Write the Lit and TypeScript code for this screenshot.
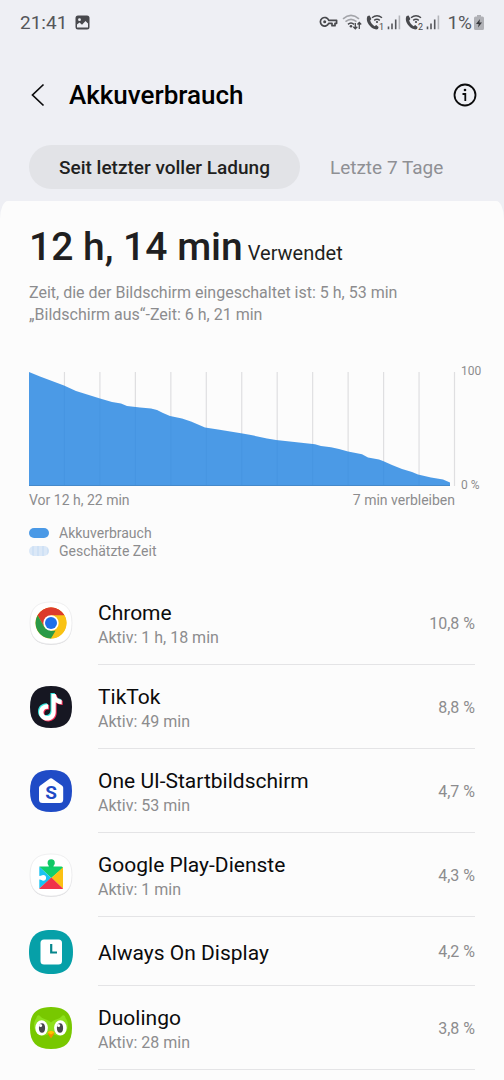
import { LitElement, html, svg, css, nothing, type TemplateResult } from "lit";
import { customElement, property, state } from "lit/decorators.js";
import { classMap } from "lit/directives/class-map.js";

const SQUIRCLE =
  "M22 1C36.500 1 43 7.500 43 22S36.500 43 22 43 1 36.500 1 22 7.500 1 22 1Z";

const chromeIcon = html`<svg viewBox="0 0 44 44" aria-hidden="true">
  <path d=${SQUIRCLE} fill="#d8d8db" transform="translate(0 .7)" />
  <path d=${SQUIRCLE} fill="#fff" stroke="#e6e6e8" stroke-width=".6" />
  <circle cx="22" cy="22" r="15.500" fill="#f9c214" />
  <path d="M22 22 8.600 14.300A15.500 15.500 0 0 1 35.400 14.300Z" fill="#dc3b2c" />
  <path d="M22 14.300H35.400A15.500 15.500 0 0 0 8.600 14.300L15.300 25.900Z" fill="#dc3b2c" />
  <path d="M8.600 14.250 15.300 25.900 22 29.700H28.700L22 37.500A15.500 15.500 0 0 1 8.600 14.250Z" fill="#2b9a47" />
  <path d="M22 14.300H35.450A15.500 15.500 0 0 1 22 37.500L28.700 25.900Z" fill="#f9c214" />
  <circle cx="22" cy="22" r="7.700" fill="#fff" />
  <circle cx="22" cy="22" r="6" fill="#1d6fe8" />
</svg>`;

const NOTE =
  "M22.300 9h4.200c.4 3.500 2.600 5.600 6 5.900v4.400c-2.300 0-4.400-.8-6-2v9.700c0 5-3.800 8.600-8.500 8.600-4.600 0-8.200-3.600-8.200-8.100 0-5 4.200-8.800 9.200-8.100v4.500c-2.500-.7-4.800 1-4.800 3.500 0 2.100 1.700 3.700 3.800 3.700 2.500 0 4.300-1.800 4.300-4.500Z";

const tiktokIcon = html`<svg viewBox="0 0 44 44" aria-hidden="true">
  <path d=${SQUIRCLE} fill="#161722" />
  <path d=${NOTE} fill="#35e6df" transform="translate(-.8 -1)" />
  <path d=${NOTE} fill="#fb3059" transform="translate(1.200 .8)" />
  <path d=${NOTE} fill="#fff" transform="translate(.2 -.1)" />
</svg>`;

const homeIcon = html`<svg viewBox="0 0 44 44" aria-hidden="true">
  <path d=${SQUIRCLE} fill="#1f4bc6" />
  <path
    d="M21 9.600q1-.8 2 0l10.200 7.200q1 .8 1 2V30.500q0 3.500-3.500 3.500H13.500Q10 34 10 30.500V18.800q0-1.200 1-2Z"
    fill="#fff"
  />
  <text x="22" y="29.500" text-anchor="middle" font-size="19" font-weight="700" fill="#1f4bc6">S</text>
</svg>`;

const playIcon = html`<svg viewBox="0 0 44 44" aria-hidden="true">
  <path d=${SQUIRCLE} fill="#d8d8db" transform="translate(0 .7)" />
  <path d=${SQUIRCLE} fill="#fff" stroke="#e6e6e8" stroke-width=".6" />
  <path d="M10.500 13.500H32.500Q34 13.500 34 15L22.300 25 10.500 14Z" fill="#0fcf6c" />
  <path d="M19.800 14.500C20.300 12 18.600 12 18.600 9.900a3.600 3.600 0 0 1 7.200 0C25.800 12 24.100 12 24.600 14.500Z" fill="#0fc765" />
  <path d="M10.300 13.700 22.300 25 10.300 35.500Z" fill="#19c3f2" />
  <path d="M34 14.300 22.300 25 34 35.500Z" fill="#fcc113" />
  <path d="M10.300 35.500 22.300 24.600 34 35.500Q33.800 36 33 36H11.300Q10.500 36 10.300 35.500Z" fill="#f0324a" />
  <path d="M9.500 22.800C12.500 23.300 12.300 21.900 14.200 21.900a2.900 2.900 0 0 1 0 5.800C12.300 27.700 12.500 26.200 9.500 26.700Z" fill="#fff" />
</svg>`;

const clockIcon = html`<svg viewBox="0 0 44 44" aria-hidden="true">
  <path d="M22 0C37 0 44 7 44 22S37 44 22 44 0 37 0 22 7 0 22 0Z" fill="#06a0a8" />
  <rect x="11.500" y="9.500" width="21.500" height="25" rx="3.500" fill="#fff" />
  <path d="M22.200 14V22.500H28" fill="none" stroke="#06868c" stroke-width="2.200" />
</svg>`;

const owlIcon = html`<svg viewBox="0 0 44 44" aria-hidden="true">
  <path d=${SQUIRCLE} fill="#78c800" />
  <path
    d="M7.500 12C8 8.500 10 8.500 11.500 10.500 15 14 19 13.200 22 16.500 25 13.200 29 14 32.500 10.500 34 8.500 36 8.500 36.500 12 41 17 39 29 31 29.500 27 30 24 28.500 22 26 20 28.500 17 30 13 29.500 5 29 3 17 7.500 12Z"
    fill="#8ee01c"
  />
  <ellipse cx="12.600" cy="21.800" rx="6.300" ry="7.600" fill="#fff" />
  <ellipse cx="31.400" cy="21.800" rx="6.300" ry="7.600" fill="#fff" />
  <ellipse cx="13" cy="22" rx="3.100" ry="4.700" fill="#47474d" />
  <ellipse cx="31" cy="22" rx="3.100" ry="4.700" fill="#47474d" />
  <circle cx="11.600" cy="19.500" r="1.500" fill="#fff" />
  <circle cx="29.600" cy="19.500" r="1.500" fill="#fff" />
  <path d="M18.800 26.500Q22 23 25.200 26.500L25 28 22 32.500 19 28Z" fill="#f49000" />
  <path d="M18.500 26.600Q22 22.800 25.500 26.600L22 28.600Z" fill="#ffc200" />
</svg>`;

interface AppUsage {
  name: string;
  active?: string;
  share: string;
  icon: TemplateResult;
}

const APPS: AppUsage[] = [
  { name: "Chrome", active: "Aktiv: 1 h, 18 min", share: "10,8 %", icon: chromeIcon },
  { name: "TikTok", active: "Aktiv: 49 min", share: "8,8 %", icon: tiktokIcon },
  { name: "One UI-Startbildschirm", active: "Aktiv: 53 min", share: "4,7 %", icon: homeIcon },
  { name: "Google Play-Dienste", active: "Aktiv: 1 min", share: "4,3 %", icon: playIcon },
  { name: "Always On Display", share: "4,2 %", icon: clockIcon },
  { name: "Duolingo", active: "Aktiv: 28 min", share: "3,8 %", icon: owlIcon },
];

@customElement("status-bar")
class StatusBar extends LitElement {
  static styles = css`
    :host {
      display: flex;
      align-items: center;
      justify-content: space-between;
      height: 44px;
      padding: 0 20px;
      color: #55565a;
      font-size: 19px;
    }
    .group {
      display: flex;
      align-items: center;
    }
    .left {
      gap: 8px;
    }
    .right {
      gap: 4px;
    }
    .battery {
      display: flex;
      align-items: center;
      gap: 2px;
      margin-left: 3px;
    }
    svg {
      display: block;
    }
    .call-group {
      display: flex;
      gap: 3px;
    }
  `;

  private call(n: string) {
    return html`<span class="call-group">
      <svg width="18" height="18" viewBox="0 0 18 18" aria-hidden="true">
        <path
          d="M1.600 3 3.600 2.500 5.400 6 4.200 7.600C4.900 10 6.500 12 8.600 13.200L10.200 12l2.400 2-.6 2C7.500 18.500-2 9.500 1.600 3Z"
          fill="#48494d"
        />
        <path d="M6 4.800Q11 .6 16 4.800M8.200 7.400Q11 5 13.800 7.400" fill="none" stroke="#48494d" stroke-width="1.400" />
        <circle cx="11" cy="9" r="1.100" fill="#48494d" />
        <text x="13" y="16.500" font-size="9" fill="#48494d">${n}</text>
      </svg>
      <svg width="14" height="18" viewBox="0 0 14 18" aria-hidden="true">
        <path d="M1.500 16.300V13.500M5 16.300V10.500M8.700 16.300V6.500" stroke="#55565a" stroke-width="1.600" />
        <path d="M12.400 16.300V2.500" stroke="#b4b5ba" stroke-width="1.600" />
      </svg>
    </span>`;
  }

  render() {
    return html`
      <div class="group left">
        <span>21:41</span>
        <svg width="15" height="15" viewBox="0 0 15 15" aria-hidden="true">
          <rect x=".5" y=".5" width="14" height="14" rx="2.500" fill="#48494d" />
          <circle cx="4.500" cy="4.700" r="1.400" fill="#eeeff4" />
          <path d="M2 12.500V9.500L4.500 7.500 7 9.800 10.500 6 13 8.500V12.500Z" fill="#eeeff4" />
        </svg>
      </div>
      <div class="group right">
        <svg width="19" height="12" viewBox="0 0 19 12" aria-hidden="true">
          <path
            d="M9.700 4.300H17.600V7.300H16V9.700H13V7.300H9.700A4.300 4.300 0 1 1 9.700 4.300Z"
            fill="none"
            stroke="#48494d"
            stroke-width="1.700"
            stroke-linejoin="round"
          />
          <circle cx="5.700" cy="5.800" r="1.500" fill="#48494d" />
        </svg>
        <svg width="20" height="18" viewBox="0 0 20 18" aria-hidden="true">
          <path d="M1 5.800Q9 -1 17 5.800M3.500 8.700Q9 4 14.500 8.700" fill="none" stroke="#a3a4a9" stroke-width="1.600" />
          <path d="M6 11.300Q9 8.700 12 11.300" fill="none" stroke="#48494d" stroke-width="1.600" />
          <circle cx="9" cy="13.300" r="1.300" fill="#48494d" />
          <path d="M13.300 10V15.500M11.300 13.800 13.300 15.800 15.300 13.800M17.300 16V10M15.500 11.500 17.300 9.500 19.200 11.500" fill="none" stroke="#48494d" stroke-width="1.300" />
        </svg>
        ${this.call("1")} ${this.call("2")}
        <span class="battery">
          1%
          <svg width="10" height="15" viewBox="0 0 10 15" aria-hidden="true">
            <path d="M3 0H7V1.500H8.500Q10 1.500 10 3V13.500Q10 15 8.500 15H1.500Q0 15 0 13.500V3Q0 1.500 1.500 1.500H3Z" fill="#b0b1b6" />
            <path d="M6 4 2 9H4.700L4 12.500 8 7.500H5.400Z" fill="#38393d" />
          </svg>
        </span>
      </div>
    `;
  }
}

/** Remaining charge over time; coordinates are on a 426 x 113 grid. */
const LEVELS: [number, number][] = [
  [0, 0], [11, 4.500], [35, 13.500], [47, 19], [71, 26.500], [83, 30], [92, 31.500], [98, 34],
  [111, 35.500], [122, 36.500], [128, 38], [134, 41], [141, 44], [153, 46.500], [162, 49.500],
  [176, 55.500], [189, 57.500], [212, 61.300], [222, 63], [238, 66.500], [247, 68], [270, 70.500],
  [286, 72.200], [292, 74], [302, 75.200], [310, 77], [319, 79.500], [333, 82.200], [339, 85.500],
  [350, 87.500], [354, 89], [363, 93], [373, 97], [383, 100], [389, 102.500], [402, 105.500],
  [414, 107.500], [421, 110.500], [421, 113],
];

@customElement("battery-chart")
class BatteryChart extends LitElement {
  static styles = css`
    :host {
      display: block;
      color: #8c8c8e;
      font-size: 14px;
      line-height: 18px;
    }
    .chart {
      display: grid;
      grid-template-columns: 1fr 28px;
      column-gap: 6px;
    }
    .plot {
      display: block;
      width: 100%;
      height: 114px;
      overflow: visible;
    }
    .scale {
      display: flex;
      flex-direction: column;
      justify-content: space-between;
      margin: -10px 0 -8px;
      font-size: 12px;
    }
    .times {
      display: flex;
      justify-content: space-between;
      margin-top: 5px;
    }
    .legend {
      margin: 15px 0 0;
      padding: 0;
      list-style: none;
    }
    .entry {
      display: flex;
      align-items: center;
      gap: 10px;
      height: 18px;
    }
    .swatch {
      width: 20px;
      height: 10px;
      border-radius: 5px;
      background: #4a99e6;
    }
    .estimated {
      background: repeating-linear-gradient(90deg, #dbe8f7 0 3px, #cfe1f5 3px 5px);
    }
  `;

  render() {
    const line = LEVELS.map(([x, y]) => `${x},${y}`).join(" ");
    const hours = Array.from({ length: 12 }, (_, i) => ((i + 1) * 425.5) / 12);
    return html`
      <div class="chart">
        <svg class="plot" viewBox="0 0 426 114" preserveAspectRatio="none" role="img" aria-label="Akkuverbrauch">
          ${hours.map((x) => svg`<path d="M${x} 0V114" stroke="#dfdfe1" stroke-width="1.200" />`)}
          <polygon points="0,113 ${line}" fill="#2b88e2" fill-opacity=".85" />
          <path d="M0 113.500H421" stroke="#4589ca" />
        </svg>
        <div class="scale"><span>100</span><span>0 %</span></div>
        <div class="times"><span>Vor 12 h, 22 min</span><span>7 min verbleiben</span></div>
      </div>
      <ul class="legend">
        <li class="entry"><span class="swatch"></span>Akkuverbrauch</li>
        <li class="entry"><span class="swatch estimated"></span>Geschätzte Zeit</li>
      </ul>
    `;
  }
}

@customElement("app-usage-row")
class AppUsageRow extends LitElement {
  @property({ attribute: false }) app!: AppUsage;

  static styles = css`
    :host {
      display: block;
    }
    .row {
      display: flex;
      align-items: stretch;
      width: 100%;
      padding: 0 0 0 29px;
      border: 0;
      background: none;
      font: inherit;
      text-align: left;
      color: #0b0b0c;
    }
    .icon {
      display: grid;
      place-items: center;
      flex: none;
      width: 44px;
      margin-right: 25px;
    }
    .icon svg {
      display: block;
      width: 44px;
      height: 44px;
    }
    .body {
      display: flex;
      flex: 1;
      align-items: center;
      justify-content: space-between;
      box-sizing: border-box;
      min-height: 84px;
      padding-top: 2px;
      border-bottom: 1px solid #e4e4e6;
    }
    .single {
      min-height: 69px;
    }
    .label {
      display: flex;
      flex-direction: column;
      padding-top: 2px;
    }
    .name {
      font-size: 21px;
      line-height: 27px;
    }
    .detail {
      font-size: 16px;
      line-height: 22px;
      color: #8c8c8e;
    }
  `;

  render() {
    const { name, active, share, icon } = this.app;
    return html`<button class="row" type="button">
      <span class="icon">${icon}</span>
      <span class=${classMap({ body: true, single: !active })}>
        <span class="label">
          <span class="name">${name}</span>
          ${active ? html`<span class="detail">${active}</span>` : nothing}
        </span>
        <span class="detail">${share}</span>
      </span>
    </button>`;
  }
}

@customElement("app-root")
class AppRoot extends LitElement {
  @state() private tab = 0;

  static styles = css`
    :host {
      display: flex;
      flex-direction: column;
      min-height: 100vh;
      background: #eeeff4;
      font-family: Roboto, sans-serif;
      color: #1f1f21;
    }
    .header {
      display: flex;
      align-items: center;
      height: 101px;
      padding: 0 26px 0 25px;
    }
    .title {
      flex: 1;
      margin: 0;
      font-size: 26px;
      font-weight: 500;
      color: #000;
    }
    .icon-button {
      display: grid;
      place-items: center;
      padding: 0;
      border: 0;
      background: none;
      color: #0b0b0c;
    }
    .back {
      width: 26px;
      height: 44px;
      margin-right: 18px;
    }
    .tabs {
      display: flex;
      padding: 0 29px;
      margin-bottom: 12px;
    }
    .tab {
      height: 44px;
      padding: 0 30px;
      border: 0;
      border-radius: 22px;
      background: none;
      font: inherit;
      font-size: 19px;
      white-space: nowrap;
      color: #8f9094;
    }
    .selected {
      background: #e2e3e7;
      font-weight: 500;
      color: #1f1f21;
    }
    .card {
      flex: 1;
      border-radius: 8px 8px 0 0 / 18px 18px 0 0;
      background: #fcfcfc;
    }
    .summary {
      padding: 0 29px;
    }
    .used {
      margin: 0;
      padding-top: 21px;
      font-size: 20px;
      font-weight: 400;
      line-height: 50px;
    }
    .time {
      font-size: 39px;
      font-weight: 500;
    }
    .screen {
      margin: 4px 0 46px;
      font-size: 16px;
      line-height: 22px;
      color: #8c8c8e;
    }
    .chart {
      margin: 0 15px 0 29px;
    }
    .apps {
      margin: 21px 29px 0 0;
      padding: 0;
      list-style: none;
    }
  `;

  render() {
    return html`
      <status-bar></status-bar>
      <header class="header">
        <button class="icon-button back" type="button" aria-label="Zurück">
          <svg width="26" height="26" viewBox="0 0 26 26" aria-hidden="true">
            <path d="M18.500 2.500 7.500 13 18.500 23.500" fill="none" stroke="currentColor" stroke-width="1.700" />
          </svg>
        </button>
        <h1 class="title">Akkuverbrauch</h1>
        <button class="icon-button" type="button" aria-label="Info">
          <svg width="26" height="26" viewBox="0 0 26 26" aria-hidden="true">
            <circle cx="13" cy="13" r="10.500" fill="none" stroke="currentColor" stroke-width="1.800" />
            <circle cx="13" cy="8" r="1.300" fill="currentColor" />
            <path d="M10.500 12H13.300V19" fill="none" stroke="currentColor" stroke-width="1.800" />
          </svg>
        </button>
      </header>
      <nav class="tabs">
        ${["Seit letzter voller Ladung", "Letzte 7 Tage"].map(
          (label, i) => html`<button
            type="button"
            class=${classMap({ tab: true, selected: i === this.tab })}
            aria-pressed=${i === this.tab ? "true" : "false"}
            @click=${() => (this.tab = i)}
          >${label}</button>`
        )}
      </nav>
      <main class="card">
        <section class="summary">
          <h2 class="used"><span class="time">12 h, 14 min</span> Verwendet</h2>
          <p class="screen">
            Zeit, die der Bildschirm eingeschaltet ist: 5 h, 53 min<br />„Bildschirm aus“-Zeit: 6 h, 21 min
          </p>
        </section>
        <battery-chart class="chart"></battery-chart>
        <ul class="apps">
          ${APPS.map((app) => html`<li><app-usage-row .app=${app}></app-usage-row></li>`)}
        </ul>
      </main>
    `;
  }
}
